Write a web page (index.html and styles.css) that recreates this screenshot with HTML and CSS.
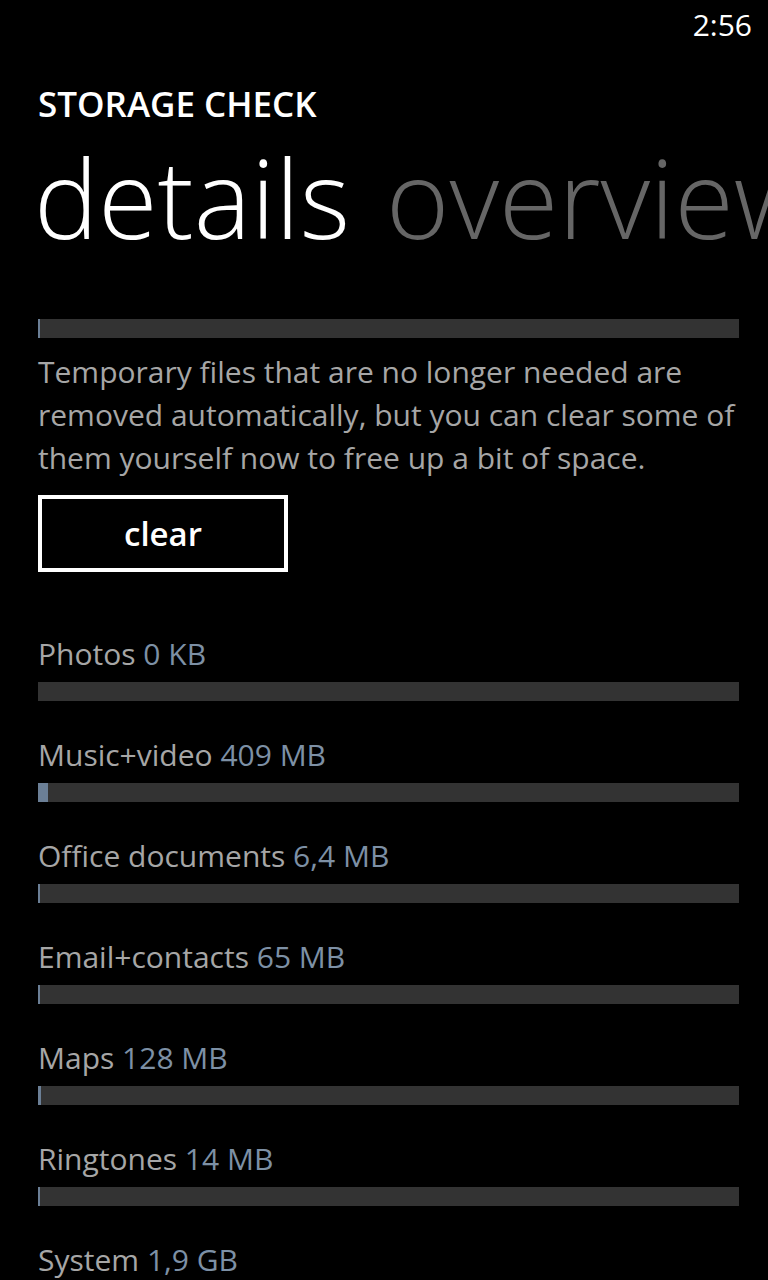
FILE: index.html
```html
<!DOCTYPE html>
<html>
<head>
<meta charset="utf-8">
<link rel="stylesheet" href="styles.css">
</head>
<body>
<div class="phone">
  <div class="status"><span class="time">2:56</span></div>
  <div class="app-title">STORAGE CHECK</div>
  <div class="pivot">
    <span class="pivot-item active">details</span><span class="pivot-item">overview</span>
  </div>
  <div class="content">
    <div class="bar top-bar"><div class="fill" style="width:2px"></div></div>
    <p class="desc">Temporary files that are no longer needed are removed automatically, but you can clear some of them yourself now to free up a bit of space.</p>
    <button class="btn">clear</button>
    <div class="list">
      <div class="item"><div class="label">Photos <span class="val">0 KB</span></div><div class="bar"></div></div>
      <div class="item"><div class="label">Music+video <span class="val">409 MB</span></div><div class="bar"><div class="fill" style="width:10px"></div></div></div>
      <div class="item"><div class="label">Office documents <span class="val">6,4 MB</span></div><div class="bar"><div class="fill" style="width:2px"></div></div></div>
      <div class="item"><div class="label">Email+contacts <span class="val">65 MB</span></div><div class="bar"><div class="fill" style="width:2px"></div></div></div>
      <div class="item"><div class="label">Maps <span class="val">128 MB</span></div><div class="bar"><div class="fill" style="width:3px"></div></div></div>
      <div class="item"><div class="label">Ringtones <span class="val">14 MB</span></div><div class="bar"><div class="fill" style="width:2px"></div></div></div>
      <div class="item"><div class="label">System <span class="val">1,9 GB</span></div><div class="bar"><div class="fill" style="width:40px"></div></div></div>
    </div>
  </div>
</div>
</body>
</html>
```
FILE: styles.css
```css
html, body {
  margin: 0;
  padding: 0;
  background: #000;
}
.phone {
  width: 768px;
  height: 1280px;
  overflow: hidden;
  background: #000;
  color: #fff;
  font-family: "Open Sans", "Noto Sans", sans-serif;
}
.status {
  display: flex;
  justify-content: flex-end;
  height: 50px;
  padding-right: 16px;
}
.time {
  font-size: 30px;
  line-height: 50px;
  color: #fff;
}
.app-title {
  margin-top: 32px;
  padding-left: 38px;
  font-size: 35px;
  font-weight: 600;
  line-height: 44px;
}
.pivot {
  white-space: nowrap;
  overflow: hidden;
  padding-left: 34px;
  margin-top: 12px;
  height: 120px;
}
.pivot-item {
  font-size: 108px;
  font-weight: 300;
  line-height: 120px;
  color: #666;
  margin-right: 36px;
}
.pivot-item.active {
  color: #fff;
}
.content {
  padding: 0 29px 0 38px;
  margin-top: 61px;
}
.bar {
  height: 19px;
  background: #333;
  display: flex;
}
.fill {
  height: 100%;
  background: #6b7f96;
}
.desc {
  margin: 12px 0 0 0;
  font-size: 30px;
  line-height: 43px;
  color: #a6a6a6;
}
.btn {
  margin-top: 16px;
  width: 250px;
  height: 77px;
  background: #000;
  border: 4px solid #fff;
  color: #fff;
  font-family: "Open Sans", "Noto Sans", sans-serif;
  font-size: 33px;
  font-weight: 600;
  padding: 0;
  display: block;
}
.list {
  margin-top: 62px;
}
.item {
  height: 101px;
}
.label {
  font-size: 30px;
  line-height: 40px;
  color: #a6a6a6;
}
.val {
  color: #7d90a5;
}
.item .bar {
  margin-top: 8px;
}
```
